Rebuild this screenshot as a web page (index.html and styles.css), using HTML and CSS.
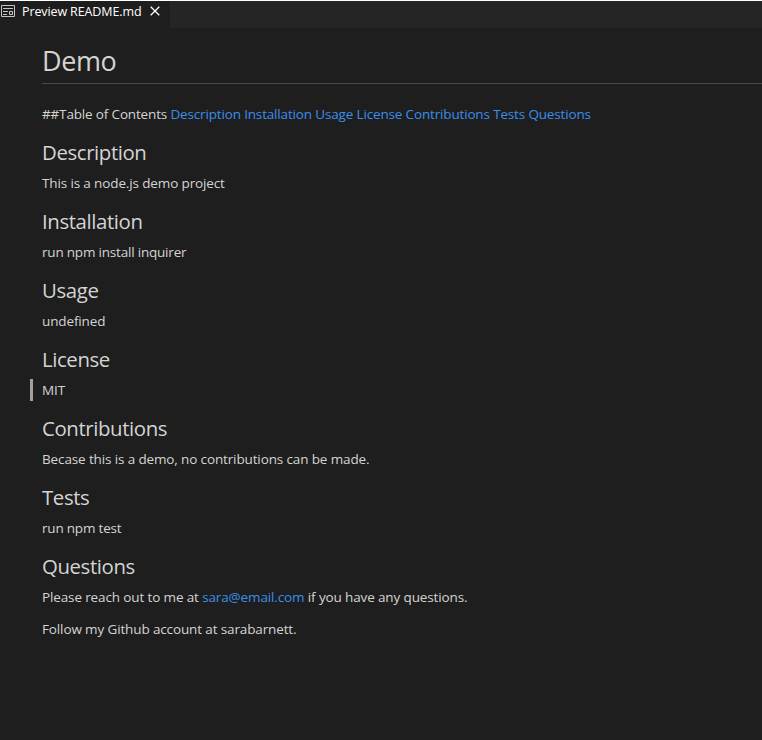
FILE: index.html
```html
<!DOCTYPE html>
<html lang="en">
<head>
<meta charset="utf-8">
<title>Preview README.md</title>
<link rel="stylesheet" href="styles.css">
</head>
<body>
<header class="tabs">
  <div class="tab">
    <svg class="tab-icon" viewBox="0 0 16 16" fill="none" stroke="#c5c5c5"><path d="M1.500 2.500h13v11h-13zM3 5.500h10M3 8.500h5M3 11.500h4M9.500 8.500h3v3h-3z"/></svg>
    <span class="tab-title">Preview README.md</span>
    <svg class="close" viewBox="0 0 10 10" fill="none" stroke="#fff" stroke-width="1.3"><path d="M.7.7l8.600 8.600M9.300.7l-8.600 8.600"/></svg>
  </div>
</header>
<main class="preview">
  <h1>Demo</h1>
  <p class="toc">##Table of Contents <a>Description</a> <a>Installation</a> <a>Usage</a> <a>License</a> <a>Contributions</a> <a>Tests</a> <a>Questions</a></p>
  <h2>Description</h2>
  <p>This is a node.js demo project</p>
  <h2>Installation</h2>
  <p class="command">run npm install inquirer</p>
  <h2>Usage</h2>
  <p>undefined</p>
  <h2>License</h2>
  <p class="marked">MIT</p>
  <h2>Contributions</h2>
  <p>Becase this is a demo, no contributions can be made.</p>
  <h2>Tests</h2>
  <p class="command">run npm test</p>
  <h2>Questions</h2>
  <p class="contact">Please reach out to me at <a>sara@email.com</a> if you have any questions.</p>
  <p>Follow my Github account at sarabarnett.</p>
</main>
</body>
</html>
```
FILE: styles.css
```css
* { box-sizing: border-box; }
body { margin: 0; height: 740px; overflow: hidden; background: #1e1e1e; color: #d4d4d4; font: 13.5px/22px "Open Sans", "Noto Sans", sans-serif; letter-spacing: -0.13px; }
.tabs { height: 28px; background: #252526; border-top: 1px solid #fff; }
.tab { display: flex; align-items: center; width: 170px; height: 27px; padding-bottom: 7px; background: #1e1e1e; color: #fff; font-size: 12.5px; letter-spacing: -0.11px; }
.tab-icon { width: 16px; height: 16px; margin-right: 6px; }
.tab-title { width: 120px; height: 22px; line-height: 24px; white-space: nowrap; }
.close { width: 10px; height: 10px; margin-left: 8px; }
.preview { padding: 15px 0 0 42px; }
h1, h2 { margin: 0; font-weight: 400; letter-spacing: -0.4px; }
h1 { height: 41px; border-bottom: 1px solid #484848; font-size: 27px; line-height: 35px; }
h2 { height: 34px; font-size: 20.4px; line-height: 29px; }
p { margin: 0 0 13px; white-space: nowrap; }
.toc { margin: 19px 0 13px; letter-spacing: -0.16px; }
.command { letter-spacing: -0.2px; }
.contact { margin-bottom: 10px; }
a { color: #3b8eea; }
.marked { position: relative; }
.marked::before { content: ""; position: absolute; left: -12px; top: 0; width: 3px; height: 22px; background: #a0a0a0; }
```
